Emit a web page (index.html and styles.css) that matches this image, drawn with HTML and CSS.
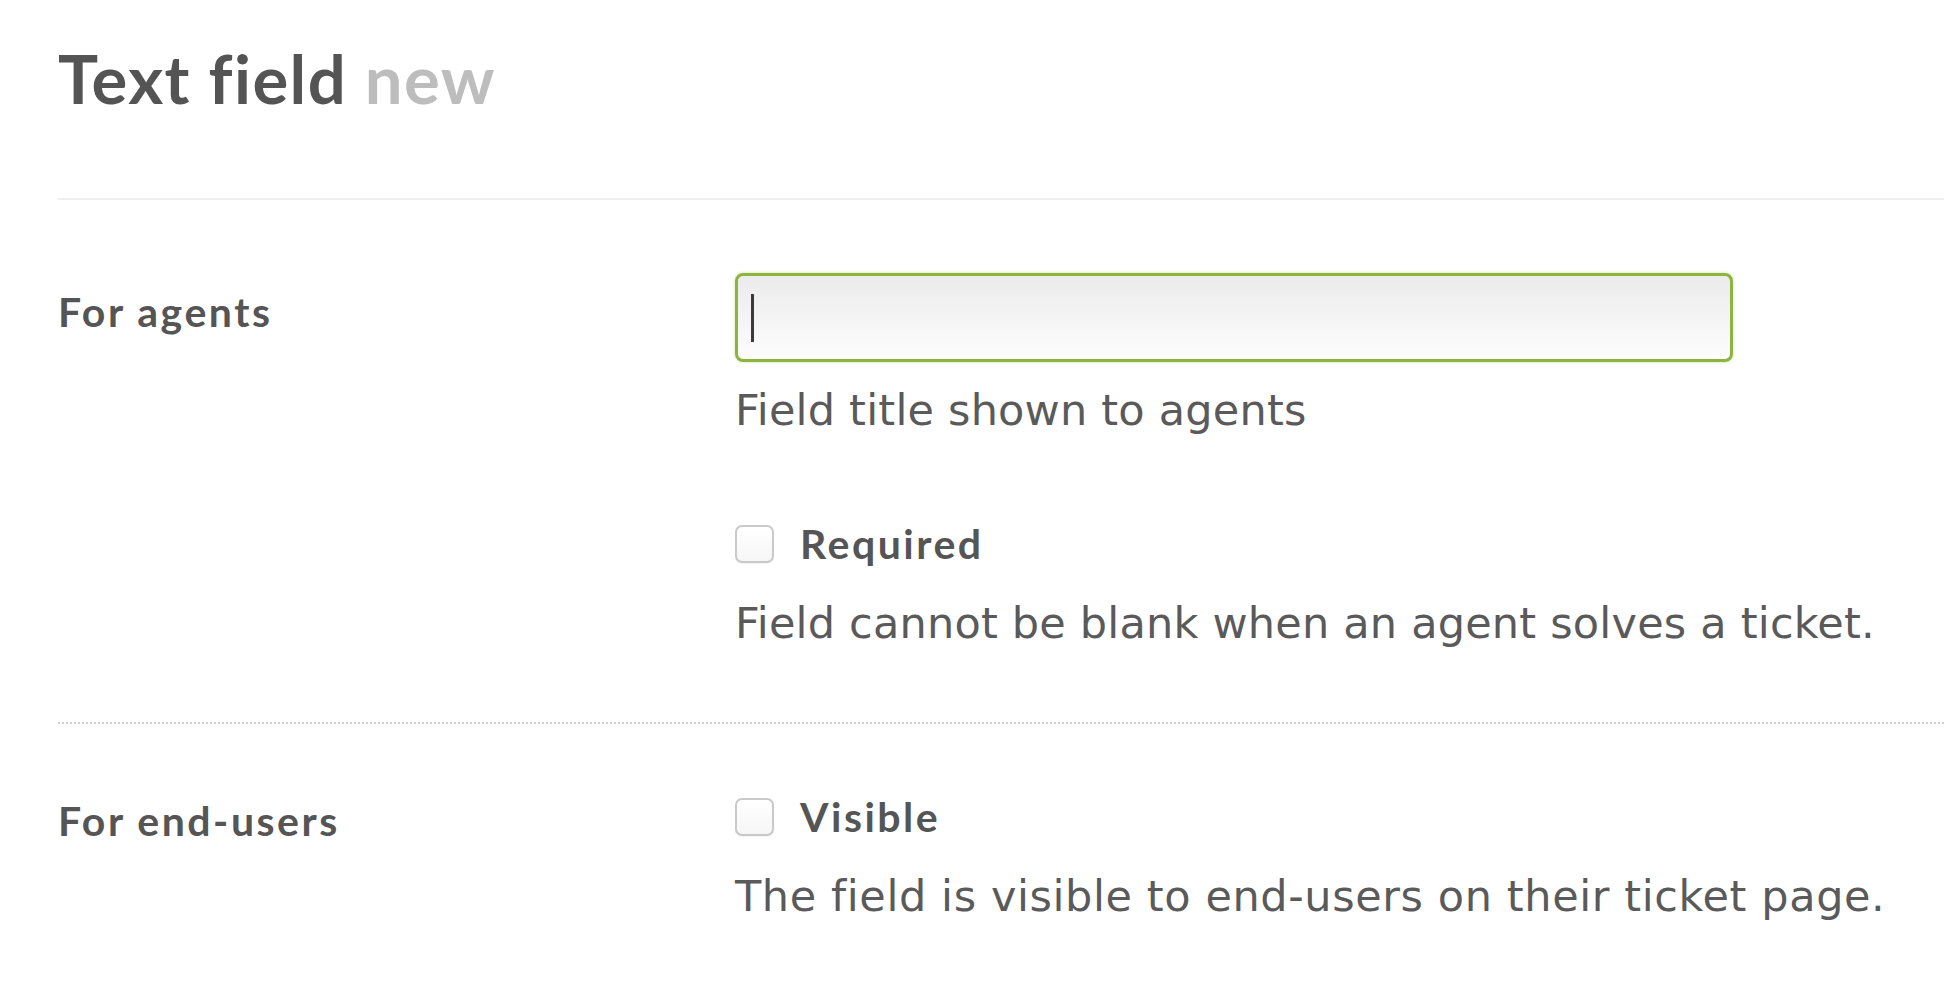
FILE: index.html
```html
<!DOCTYPE html>
<html lang="en">
<head>
<meta charset="utf-8">
<title>Text field new</title>
<link rel="stylesheet" href="styles.css">
</head>
<body>
<div class="page">
  <h1 class="title">Text field <span class="title-new">new</span></h1>
  <hr class="rule">
  <section class="row row-agents">
    <div class="label">For agents</div>
    <div class="content">
      <div class="text-input"><span class="caret"></span></div>
      <p class="help help-title">Field title shown to agents</p>
      <label class="check check-required"><span class="box"></span><span class="check-label">Required</span></label>
      <p class="help help-required">Field cannot be blank when an agent solves a ticket.</p>
    </div>
  </section>
  <hr class="dotted">
  <section class="row row-users">
    <div class="label label-users">For end-users</div>
    <div class="content">
      <label class="check check-visible"><span class="box"></span><span class="check-label">Visible</span></label>
      <p class="help help-visible">The field is visible to end-users on their ticket page.</p>
    </div>
  </section>
</div>
</body>
</html>
```
FILE: styles.css
```css
html, body {
  margin: 0;
  padding: 0;
  background: #ffffff;
}

.page {
  padding-left: 58px;
  color: #555555;
}

.title {
  margin: 38px 0 0 0;
  font-family: Lato, "Open Sans", sans-serif;
  font-weight: 700;
  font-size: 67px;
  line-height: 80px;
  color: #545454;
  letter-spacing: 1.4px;
}

.title-new {
  color: #bdbdbd;
}

.rule {
  margin: 80px 0 0 0;
  border: 0;
  height: 2px;
  background: #efefef;
}

.row {
  display: grid;
  grid-template-columns: 677px 1fr;
}

.label {
  font-family: Lato, "Open Sans", sans-serif;
  font-weight: 700;
  font-size: 41px;
  line-height: 47px;
  letter-spacing: 2.5px;
  color: #555555;
}

.row-agents .label {
  padding-top: 88px;
}

.row-agents .content {
  padding-top: 73px;
}

.text-input {
  box-sizing: border-box;
  width: 998px;
  height: 89px;
  border: 3px solid #8db440;
  border-radius: 8px;
  background: linear-gradient(#ebebeb, #fdfdfd);
  box-shadow: 0 0 3px rgba(150, 190, 70, 0.55);
  display: flex;
  align-items: center;
  padding-left: 13px;
}

.caret {
  width: 3px;
  height: 48px;
  background: #3a3a3a;
}

.help {
  margin: 0;
  font-family: "DejaVu Sans", Verdana, sans-serif;
  font-size: 43px;
  line-height: 50px;
  letter-spacing: 0.2px;
  color: #5a5a5a;
}

.help-title {
  margin-top: 23px;
}

.check {
  display: flex;
  align-items: center;
  gap: 26px;
}

.check-required {
  margin-top: 85px;
}

.box {
  box-sizing: border-box;
  width: 39px;
  height: 38px;
  border: 2px solid #c9c9c9;
  border-radius: 7px;
  background: linear-gradient(#ffffff, #f6f6f6);
  box-shadow: 0 1px 1px rgba(0, 0, 0, 0.06);
}

.check-label {
  font-family: Lato, "Open Sans", sans-serif;
  font-weight: 700;
  font-size: 41px;
  line-height: 47px;
  letter-spacing: 2.5px;
  color: #555555;
}

.help-required {
  margin-top: 31px;
}

.dotted {
  margin: 74px 0 0 0;
  border: 0;
  border-top: 2px dotted #cfcfcf;
  height: 0;
}

.row-users .label {
  padding-top: 73px;
}

.row-users .content {
  padding-top: 69px;
}

.help-visible {
  margin-top: 31px;
  letter-spacing: 0.6px;
}
```
